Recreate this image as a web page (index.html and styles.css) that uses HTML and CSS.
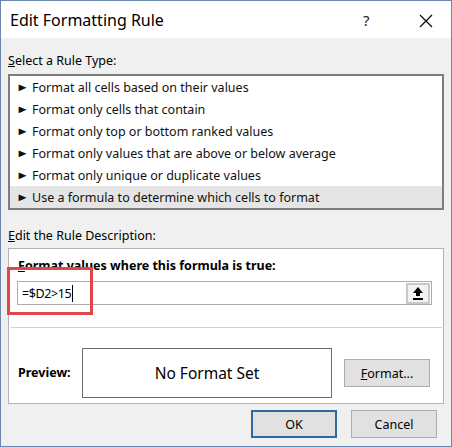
FILE: index.html
```html
<!DOCTYPE html>
<html>
<head>
<meta charset="utf-8">
<link rel="stylesheet" href="styles.css">
</head>
<body>
<div class="dialog">
  <div class="titlebar">
    <span class="title">Edit Formatting Rule</span>
    <span class="help">?</span>
    <span class="close">
      <svg width="14" height="14" viewBox="0 0 14 14"><path d="M1 1 L13 13 M13 1 L1 13" stroke="#000" stroke-width="1.1" fill="none"/></svg>
    </span>
  </div>
  <div class="content">
    <div class="label label-top"><u>S</u>elect a Rule Type:</div>
    <div class="listbox">
      <div class="item"><span class="arrow">►</span>Format all cells based on their values</div>
      <div class="item"><span class="arrow">►</span>Format only cells that contain</div>
      <div class="item"><span class="arrow">►</span>Format only top or bottom ranked values</div>
      <div class="item"><span class="arrow">►</span>Format only values that are above or below average</div>
      <div class="item"><span class="arrow">►</span>Format only unique or duplicate values</div>
      <div class="item selected"><span class="arrow">►</span>Use a formula to determine which cells to format</div>
    </div>
    <div class="label label-desc"><u>E</u>dit the Rule Description:</div>
    <div class="panel">
      <div class="bold-label"><u>F</u>ormat values where this formula is true:</div>
      <div class="input">
        <span class="formula">=$D2&gt;15</span><span class="caret"></span>
        <span class="refbtn">
          <svg width="12" height="14" viewBox="0 0 12 14"><path d="M6 1 L11 7 L8 7 L8 10 L4 10 L4 7 L1 7 Z" fill="#000"/><rect x="1" y="12" width="10" height="2" fill="#000"/></svg>
        </span>
      </div>
      <div class="highlight"></div>
      <div class="separator"></div>
      <div class="preview-row">
        <span class="bold-label preview-label">Preview:</span>
        <div class="preview-box">No Format Set</div>
        <button class="btn format-btn"><u>F</u>ormat...</button>
      </div>
    </div>
    <div class="buttons">
      <button class="btn ok">OK</button>
      <button class="btn cancel">Cancel</button>
    </div>
  </div>
</div>
</body>
</html>
```

FILE: styles.css
```css
* { box-sizing: border-box; }
html, body { margin: 0; padding: 0; }
body {
  font-family: "Noto Sans", "Open Sans", sans-serif;
  font-size: 12.5px;
  color: #000;
  background: #f0f0f0;
}
.dialog {
  width: 452px;
  height: 447px;
  border: 1px solid #6b87ad;
  background: #f0f0f0;
  overflow: hidden;
}
.titlebar {
  height: 37px;
  background: #fff;
  display: flex;
  align-items: center;
  padding-left: 9px;
}
.title {
  font-size: 16px;
  flex: 1;
}
.help {
  font-size: 15px;
  width: 56px;
  color: #222;
}
.close {
  width: 32px;
  display: flex;
  padding-top: 2px;
}
.content {
  padding: 0 7px;
}
.label {
  height: 16px;
  line-height: 16px;
  font-size: 12.5px;
}
.label-top { margin-top: 15px; margin-bottom: 5px; }
.label-desc { margin-top: 18px; margin-bottom: 4px; }
.listbox {
  width: 436px;
  border: 2px solid #7d7d7d;
  background: #fff;
  padding: 0;
}
.item {
  height: 22px;
  line-height: 22px;
  padding-left: 6px;
  white-space: nowrap;
  color: #111;
}
.arrow {
  font-size: 11px;
  display: inline-block;
  width: 16px;
  vertical-align: 1px;
  transform: scaleX(1.2);
  transform-origin: left center;
}
.item.selected {
  background: #e5e5e5;
}
.panel {
  position: relative;
  width: 436px;
  height: 156px;
  background: #fff;
  border: 1px solid #b4b4b4;
  padding: 9px 9px 0 9px;
}
.bold-label {
  font-weight: bold;
  font-size: 12.5px;
  line-height: 16px;
}
.input {
  margin-top: 7px;
  margin-left: -1px;
  width: 415px;
  height: 24px;
  border: 1px solid #acacac;
  display: flex;
  align-items: center;
  padding-left: 4px;
  padding-right: 1px;
}
.formula {
  font-size: 12.5px;
  letter-spacing: -0.4px;
}
.caret {
  width: 1px;
  height: 17px;
  background: #000;
  margin-left: 1px;
}
.refbtn {
  margin-left: auto;
  width: 24px;
  height: 21px;
  background: #f2f2f2;
  border: 2px solid #c8c8c8;
  display: flex;
  align-items: center;
  justify-content: center;
}
.highlight {
  position: absolute;
  left: -2px;
  top: 18px;
  width: 86px;
  height: 48px;
  border: 3px solid #e0474c;
}
.separator {
  margin-top: 22px;
  margin-left: -7px;
  width: 431px;
  height: 1px;
  background: #d2d2d2;
}
.preview-row {
  display: flex;
  align-items: center;
  margin-top: 20px;
}
.preview-label {
  width: 64px;
}
.preview-box {
  width: 250px;
  height: 50px;
  border: 1px solid #6a6a6a;
  display: flex;
  align-items: center;
  justify-content: center;
  font-size: 15.5px;
}
.btn {
  font-family: "Noto Sans", "Open Sans", sans-serif;
  font-size: 12.5px;
  color: #000;
  background: #e1e1e1;
  border: 1px solid #adadad;
  padding: 0;
  height: 28px;
  width: 86px;
}
.format-btn {
  margin-left: 12px;
}
.buttons {
  display: flex;
  justify-content: flex-end;
  gap: 14px;
  margin-top: 6px;
  padding-right: 7px;
}
.ok {
  border: 2px solid #2c6ca3;
}
```
